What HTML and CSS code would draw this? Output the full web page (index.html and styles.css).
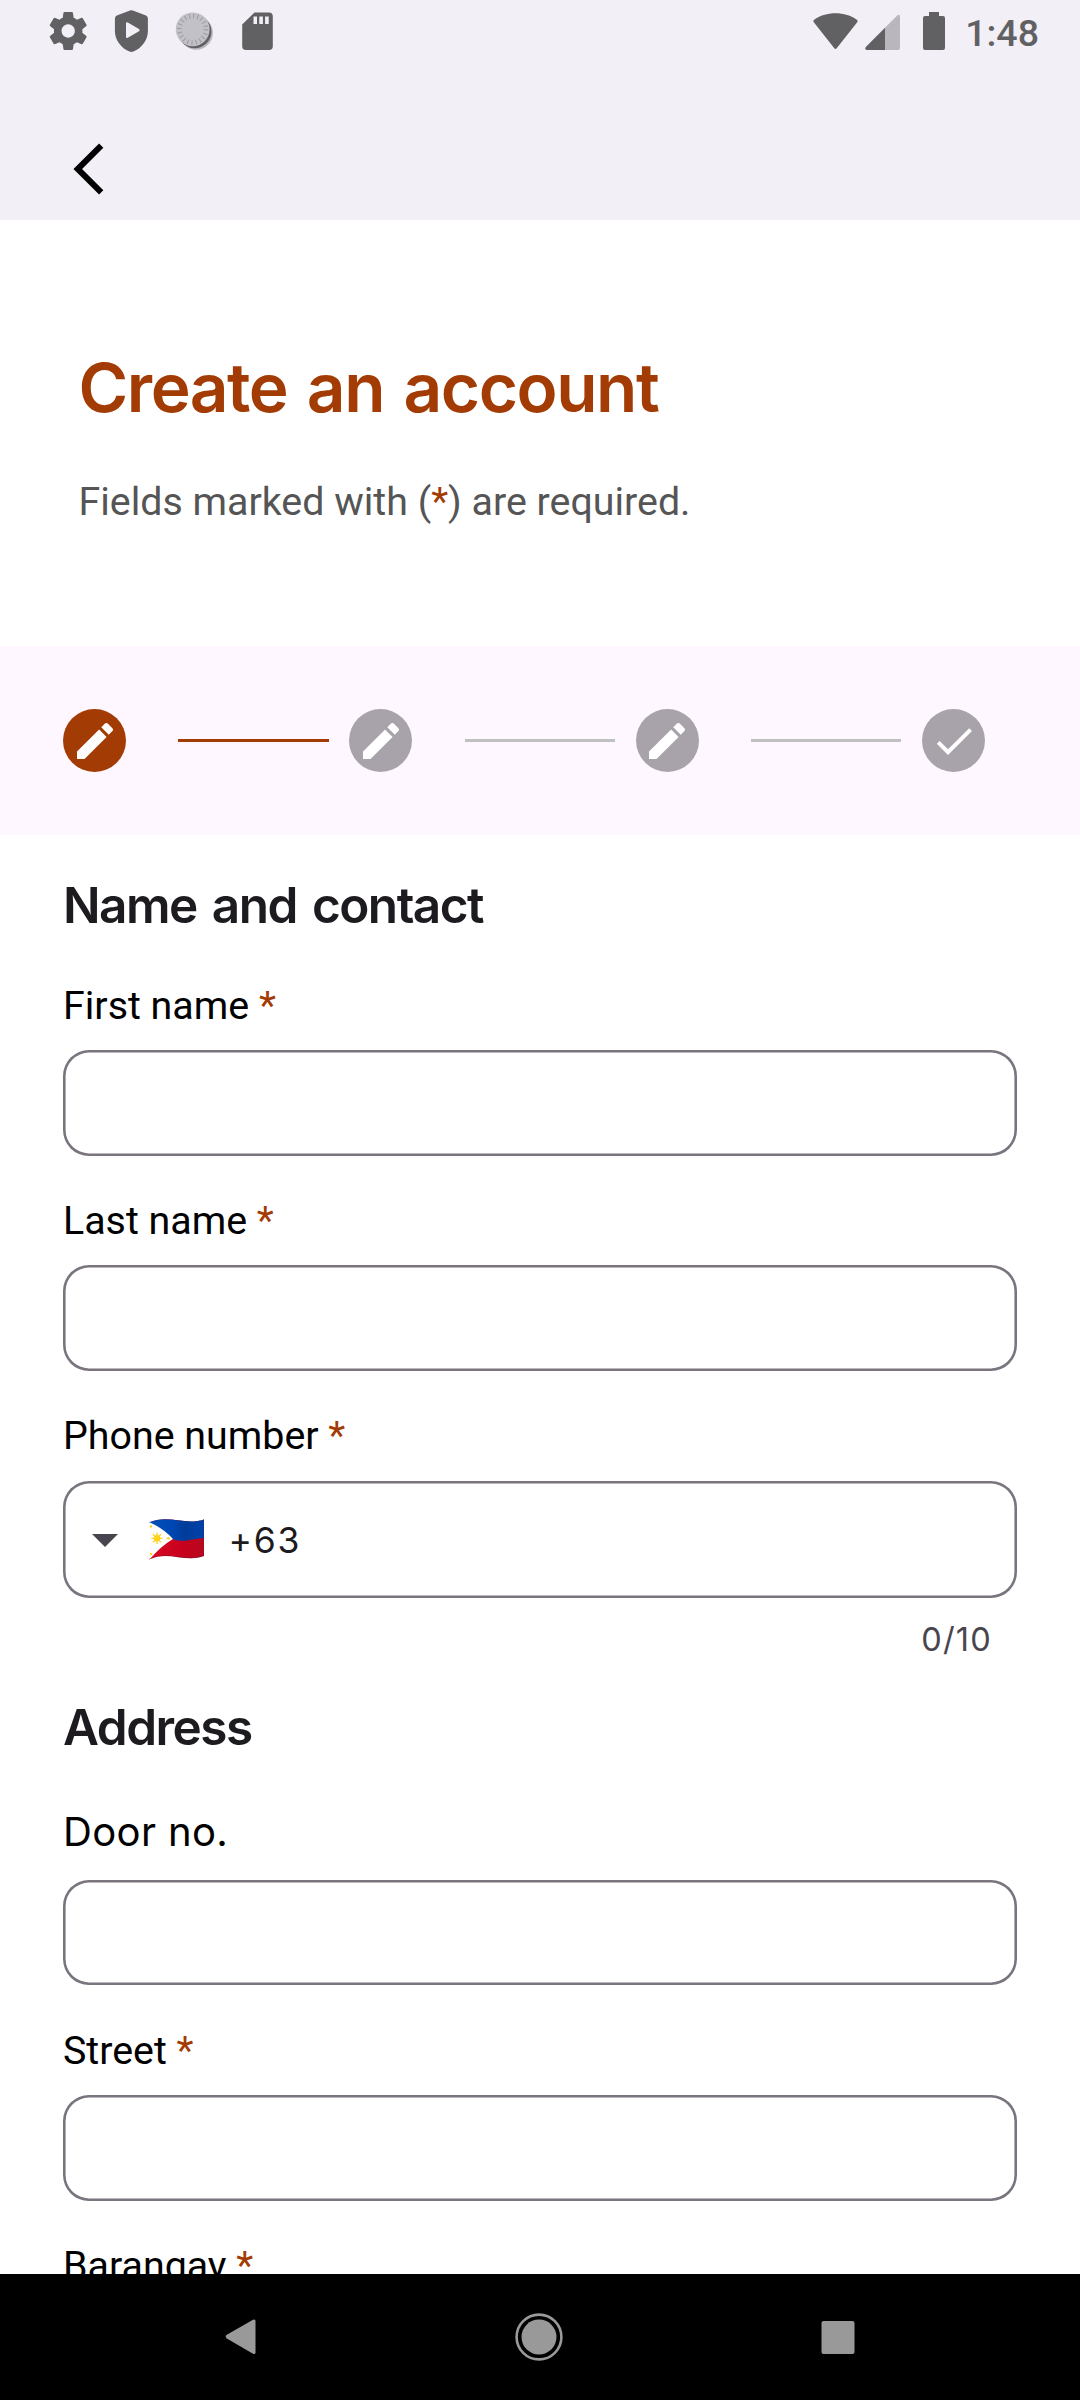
FILE: index.html
```html
<!DOCTYPE html>
<html lang="en">
<head>
<meta charset="utf-8">
<title>Create an account</title>
<link rel="stylesheet" href="styles.css">
</head>
<body>
<svg class="defs" aria-hidden="true">
  <symbol id="pencil" viewBox="0 0 24 24"><path d="M3 17.25V21h3.75L17.81 9.94l-3.75-3.75L3 17.25zM20.71 7.04c.39-.39.39-1.02 0-1.41l-2.34-2.34c-.39-.39-1.02-.39-1.41 0l-1.83 1.83 3.75 3.75 1.83-1.83z"/></symbol>
  <symbol id="check" viewBox="0 0 24 24"><path d="M9 16.17L4.83 12l-1.42 1.41L9 19 21 7l-1.41-1.41z"/></symbol>
</svg>
<div class="screen">
  <header class="top">
    <div class="status">
      <div class="status-left">
        <svg class="ic" viewBox="0 0 48 48"><path transform="translate(1.4 1.2) scale(1.9)" d="M19.43 12.98c.04-.32.07-.64.07-.98s-.03-.66-.07-.98l2.11-1.65c.19-.15.24-.42.12-.64l-2-3.46c-.12-.22-.39-.3-.61-.22l-2.49 1c-.52-.4-1.08-.73-1.69-.98l-.38-2.65C14.46 2.18 14.25 2 14 2h-4c-.25 0-.46.18-.49.42l-.38 2.65c-.61.25-1.17.59-1.69.98l-2.49-1c-.23-.09-.49 0-.61.22l-2 3.46c-.13.22-.07.49.12.64l2.11 1.65c-.04.32-.07.65-.07.98s.03.66.07.98l-2.11 1.65c-.19.15-.24.42-.12.64l2 3.46c.12.22.39.3.61.22l2.49-1c.52.4 1.08.73 1.69.98l.38 2.65c.03.24.24.42.49.42h4c.25 0 .46-.18.49-.42l.38-2.65c.61-.25 1.17-.59 1.69-.98l2.49 1c.23.09.49 0 .61-.22l2-3.46c.12-.22.07-.49-.12-.64l-2.11-1.65zM12 15.5c-1.93 0-3.5-1.57-3.5-3.5s1.57-3.5 3.5-3.5 3.5 1.57 3.5 3.5-1.57 3.5-3.5 3.5z"/></svg>
        <svg class="ic" viewBox="0 0 48 48"><path fill-rule="evenodd" d="M23 3.6q1.4-.6 2.8 0L39 8.4q1.9.8 1.9 3V24c0 9-6 17-14.500 20.600q-2 .8-4 0C14 41 7.900 33 7.900 24V11.400q0-2.200 1.900-3zM19 16.300v13.600q.2 1.600 1.800.8l11.200-6.400q1.600-1.200 0-2.400l-11.200-6.400q-1.600-.8-1.800.8z"/></svg>
        <svg class="ic" viewBox="0 0 48 48"><circle cx="26.200" cy="26" r="16.700" fill="#b9b8bd"/><circle cx="24.700" cy="24.500" r="16.700"/><circle cx="22.700" cy="22.300" r="16.900" fill="#c2c1c7"/><circle cx="22.700" cy="22.300" r="13.200" fill="none" stroke="#9f9ea3" stroke-width="4.800" stroke-dasharray="1.100 3.047"/></svg>
        <svg class="ic" viewBox="0 0 48 48"><path fill-rule="evenodd" d="M21.500 5.500H36q3.800 0 3.800 3.800v30q0 3.800-3.800 3.800H13q-3.800 0-3.800-3.800V17.500zM20.500 9.500v7.500H24V9.500zM26.300 9.500v7.500h3.600V9.500zM32.100 9.500v7.500h3.600V9.500z"/></svg>
      </div>
      <div class="status-right">
        <svg class="net" viewBox="0 0 134 48"><path d="M.8 15.200Q-.2 13.800 1.200 12.800C12 3.900 33 3.900 43.800 12.800q1.400 1 .4 2.400L23.700 41.200q-1.200 1.400-2.400 0z"/><path fill="#b9b7bd" d="M72 20.700 84.300 8.400Q87 6.600 87 9.600V41q0 2-2 2H72z"/><path d="M72 20.700V43H54q-2.800-.4-1.200-3z"/><path d="M116 5h10v4h4q2 0 2 2v30q0 2-2 2h-18q-2 0-2-2V11q0-2 2-2h4z"/></svg>
        <span class="clock">1:48</span>
      </div>
    </div>
    <svg class="back" viewBox="0 0 32 54"><path d="M28.200 3.600 4.700 27l23.500 23.400" fill="none" stroke="#000" stroke-width="6"/></svg>
  </header>

  <section class="intro">
    <h1>Create an account</h1>
    <p>Fields marked with (<span class="req">*</span>) are required.</p>
  </section>

  <div class="steps">
    <span class="step active"><svg><use href="#pencil"/></svg></span>
    <span class="line active"></span>
    <span class="step"><svg><use href="#pencil"/></svg></span>
    <span class="line"></span>
    <span class="step"><svg><use href="#pencil"/></svg></span>
    <span class="line"></span>
    <span class="step"><svg><use href="#check"/></svg></span>
  </div>

  <main class="form">
    <h2>Name and contact</h2>
    <div class="fields">
      <div class="field"><label>First name <span class="req">*</span></label><div class="box"></div></div>
      <div class="field"><label>Last name <span class="req">*</span></label><div class="box"></div></div>
      <div class="field"><label>Phone number <span class="req">*</span></label>
        <div class="box phone">
          <svg class="caret" viewBox="0 0 26 13"><path d="M0 0h26L13 13z"/></svg>
          <svg class="flag" viewBox="0 0 55 41">
            <defs>
              <clipPath id="wave"><path d="M0 3.500C19-5 36 7 55 .500V37C36 44 19 31 0 40.500z"/></clipPath>
              <linearGradient id="blue" x2="1" y2="0"><stop offset="0" stop-color="#0052b8"/><stop offset=".4" stop-color="#0047b4"/><stop offset=".65" stop-color="#003c9a"/><stop offset="1" stop-color="#0042aa"/></linearGradient>
              <linearGradient id="red" x2="1" y2="0"><stop offset="0" stop-color="#d80a24"/><stop offset=".6" stop-color="#c8001e"/><stop offset="1" stop-color="#b7091d"/></linearGradient>
            </defs>
            <g clip-path="url(#wave)">
              <path fill="url(#red)" d="M0 0h55v41H0z"/>
              <path fill="url(#blue)" d="M0 0h55v19C42 20 34 24 23 20L0 20z"/>
              <path fill="#fdfdfd" d="M0 3q14 6 24 17Q12 27 0 41z"/>
              <g stroke="#ffd21c" stroke-width="1.300"><path d="M8 13.500v11.500M2.500 19.300h11M4 15.200l8 8.200M12 15.200l-8 8.200"/></g>
              <circle cx="8" cy="19.300" r="3.200" fill="#ffd21c"/>
              <g fill="#ffd21c"><circle cx="19.300" cy="19.300" r="1.400"/><circle cx="2" cy="7.500" r="1.200"/><circle cx="2" cy="35" r="1.200"/></g>
              <path d="M0 40.500C19 31 36 44 55 37V.5" fill="none" stroke="#5a1a40" stroke-opacity=".35" stroke-width="1.500"/>
            </g>
          </svg>
          <span class="code">+63</span>
        </div>
      </div>
    </div>
    <div class="counter">0/10</div>
    <h2>Address</h2>
    <div class="fields address">
      <div class="field door"><label>Door no.</label><div class="box"></div></div>
      <div class="field"><label>Street <span class="req">*</span></label><div class="box"></div></div>
      <div class="field"><label>Barangay <span class="req">*</span></label><div class="box"></div></div>
    </div>
  </main>

  <nav class="nav">
    <svg viewBox="0 0 48 48"><path d="M9.400 25.200Q7.700 23.500 9.400 22L36 6.700q2.500-1 2.500 1.300V39.500q0 2.300-2.500 1.300z"/></svg>
    <svg viewBox="0 0 48 48"><circle cx="24" cy="24" r="17.500"/><circle cx="24" cy="24" r="22.400" fill="none" stroke="#999" stroke-width="2.600"/></svg>
    <svg viewBox="0 0 48 48"><rect x="7.500" y="8" width="33" height="33" rx="2"/></svg>
  </nav>
</div>
</body>
</html>
```
FILE: styles.css
```css
* { box-sizing: border-box; }

body {
  margin: 0;
  background: #fff;
  font-family: Roboto, sans-serif;
  color: #000;
}

.defs { display: none; }

.screen {
  display: flex;
  flex-direction: column;
  width: 1080px;
  height: 2400px;
  overflow: hidden;
}

h1, h2, p { margin: 0; }

.req { color: #a33c04; }

.top {
  flex: none;
  display: flex;
  flex-direction: column;
  align-items: flex-start;
  height: 220px;
  background: #f2eff7;
}

.status {
  display: flex;
  justify-content: space-between;
  width: 100%;
  height: 55px;
  padding: 7px 41px 0 44px;
}

.status-left { display: flex; gap: 15px; }

.status svg { display: block; fill: #616163; }

.ic { width: 48px; height: 48px; }

.status-right { display: flex; gap: 18px; }

.net { width: 134px; height: 48px; }

.clock {
  font-size: 37.5px;
  font-weight: 500;
  line-height: 52px;
  color: #616163;
}

.back {
  width: 32px;
  height: 54px;
  margin: 86.500px 0 0 73px;
}

.intro {
  flex: none;
  height: 426px;
  padding: 127px 78.500px 0;
}

h1 {
  font-family: Inter, sans-serif;
  font-size: 67.500px;
  font-weight: 580;
  line-height: 82px;
  letter-spacing: -1.450px;
  word-spacing: 4px;
  color: #a33c04;
}

.intro p {
  margin-top: 50px;
  font-size: 39.375px;
  line-height: 46px;
  color: #555;
}

.steps {
  flex: none;
  display: flex;
  align-items: center;
  height: 189px;
  padding-left: 63px;
  background: #fef7ff;
}

.step {
  display: flex;
  align-items: center;
  justify-content: center;
  width: 63px;
  height: 63px;
  border-radius: 50%;
  background: #a8a3aa;
}

.step svg { width: 48px; height: 48px; fill: #fff; }

.line {
  width: 150.400px;
  height: 3px;
  margin: 0 20.700px 0 52.300px;
  background: #bfc0c0;
}

.active { background: #a33c04; }

.form {
  flex: 1;
  min-height: 0;
  overflow: hidden;
  padding: 40px 63px 0;
}

h2 {
  font-family: Inter, sans-serif;
  font-size: 49.500px;
  font-weight: 600;
  line-height: 60px;
  letter-spacing: -1.500px;
  word-spacing: 4px;
  color: #1d1b20;
}

.fields {
  display: flex;
  flex-direction: column;
  gap: 42.250px;
  margin-top: 47.500px;
}

.field { display: flex; flex-direction: column; gap: 21.500px; }

label { font-size: 39.375px; line-height: 46px; }

.box {
  height: 105.500px;
  border-radius: 26px;
  box-shadow: inset 0 0 0 2.600px #79747e;
}

.phone {
  display: flex;
  align-items: center;
  height: 117.500px;
  padding-left: 29px;
}

.caret { width: 26px; height: 13px; margin-top: 2px; fill: #49454f; }

.flag { width: 55px; height: 41px; margin-left: 31px; }

.code {
  margin: 2px 0 0 24.500px;
  font-family: Inter, sans-serif;
  font-size: 35.500px;
  font-weight: 370;
  letter-spacing: 1.800px;
  color: #1d1b20;
}

.counter {
  margin: 22.200px 0 36.800px;
  padding-right: 25px;
  font-family: Inter, sans-serif;
  font-size: 32.500px;
  font-weight: 370;
  line-height: 40px;
  letter-spacing: 1.200px;
  text-align: right;
  color: #49454f;
}

.address { margin-top: 51.400px; }

.door { gap: 23.600px; }

.door label {
  font-family: Inter, sans-serif;
  font-size: 40px;
  font-weight: 370;
  line-height: 48px;
  letter-spacing: .350px;
}

.nav {
  flex: none;
  display: flex;
  justify-content: space-between;
  height: 126px;
  padding: 38.500px 218.500px 0 217px;
  background: #000;
}

.nav svg { width: 48px; height: 48px; fill: #999; }
```
